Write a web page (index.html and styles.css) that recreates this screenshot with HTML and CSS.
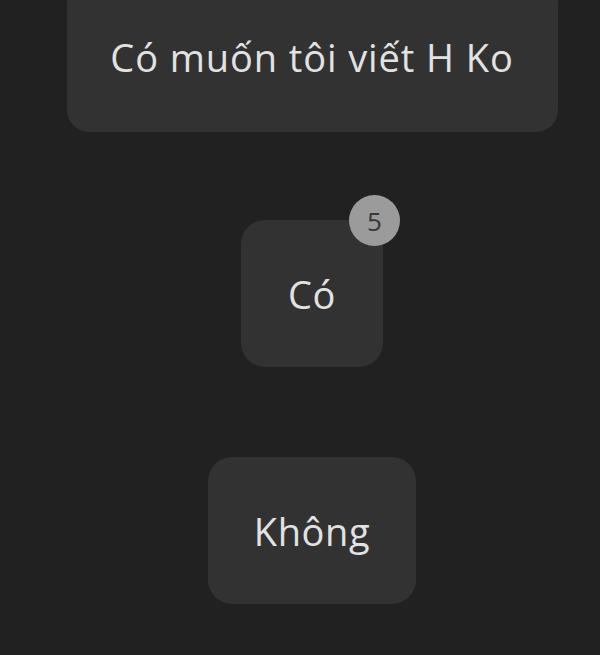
FILE: index.html
```html
<!DOCTYPE html>
<html lang="vi">
<head>
<meta charset="utf-8">
<link rel="stylesheet" href="styles.css">
</head>
<body>
<div class="page">
  <div class="card"><span class="msg">Có muốn tôi viết H Ko</span></div>
  <div class="options">
    <div class="btn btn-yes">
      <span class="label">Có</span>
      <span class="badge">5</span>
    </div>
    <div class="btn btn-no">
      <span class="label">Không</span>
    </div>
  </div>
</div>
</body>
</html>
```
FILE: styles.css
```css
html, body {
  margin: 0;
  padding: 0;
  background: #212121;
  height: 100%;
  overflow: hidden;
}
.page {
  width: 600px;
  box-sizing: border-box;
  padding-left: 24px;
  display: flex;
  flex-direction: column;
  align-items: center;
  font-family: "Open Sans", "Noto Sans", sans-serif;
  color: #e2e2e2;
}
.card {
  width: 491px;
  height: 150px;
  margin-top: -18px;
  background: #323232;
  border-radius: 22px;
  display: flex;
  align-items: center;
  justify-content: center;
}
.msg {
  font-size: 38px;
  letter-spacing: 0.9px;
}
.options {
  display: flex;
  flex-direction: column;
  align-items: center;
  gap: 90px;
  margin-top: 88px;
}
.btn {
  position: relative;
  height: 147px;
  min-width: 142px;
  box-sizing: border-box;
  padding: 0 46px;
  background: #323232;
  border-radius: 24px;
  display: flex;
  align-items: center;
  justify-content: center;
  font-size: 38px;
  letter-spacing: 0.6px;
}
.badge {
  position: absolute;
  top: -25px;
  right: -17px;
  width: 51px;
  height: 51px;
  border-radius: 50%;
  background: #9b9b9b;
  color: #383838;
  font-size: 26px;
  letter-spacing: 0;
  display: flex;
  align-items: center;
  justify-content: center;
}
```
